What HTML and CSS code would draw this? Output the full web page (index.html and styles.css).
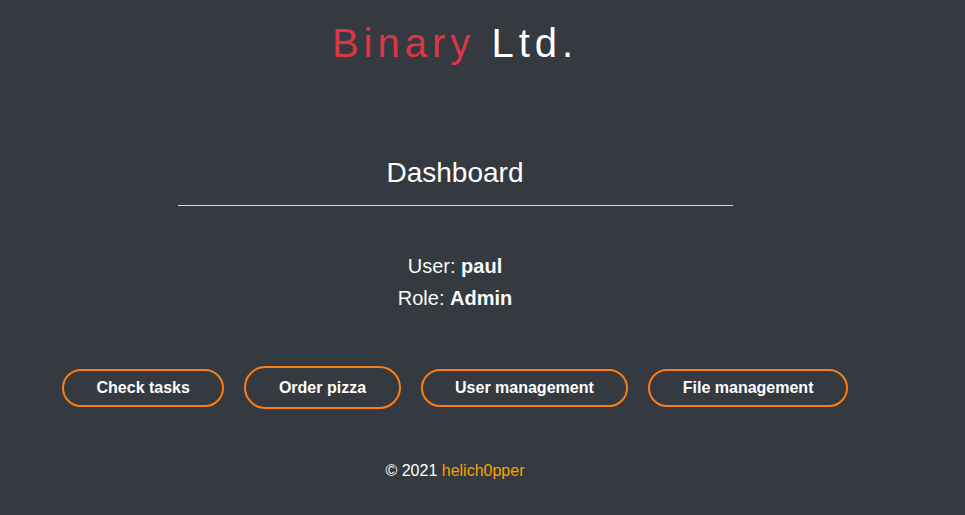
FILE: index.html
```html
<!DOCTYPE html>
<html lang="en">
<head>
<meta charset="utf-8">
<title>Binary Ltd. - Dashboard</title>
<link rel="stylesheet" href="styles.css">
</head>
<body>
<main class="page">
  <header class="brand">
    <h1 class="brand-title"><span class="brand-red">Binary</span> Ltd.</h1>
  </header>
  <section class="dash">
    <h2 class="dash-title">Dashboard</h2>
    <hr class="dash-rule">
    <div class="info">
      <p class="info-line">User: <b>paul</b></p>
      <p class="info-line">Role: <b>Admin</b></p>
    </div>
    <nav class="actions">
      <a class="btn" href="#">Check tasks</a>
      <a class="btn btn-tall" href="#">Order pizza</a>
      <a class="btn" href="#">User management</a>
      <a class="btn" href="#">File management</a>
    </nav>
  </section>
  <footer class="foot">© 2021 <a class="foot-link" href="#">helich0pper</a></footer>
</main>
</body>
</html>
```
FILE: styles.css
```css
html, body {
  margin: 0;
  padding: 0;
  background: #343a40;
  color: #f8f9fa;
  font-family: "Liberation Sans", Arial, sans-serif;
}
.page {
  width: 910px;
  display: flex;
  flex-direction: column;
  align-items: center;
}
.brand {
  padding-top: 20px;
}
.brand-title {
  margin: 0;
  font-size: 40px;
  line-height: 46px;
  font-weight: 400;
  letter-spacing: 5px;
  color: #ffffff;
}
.brand-red {
  color: #dc3545;
}
.dash {
  display: flex;
  flex-direction: column;
  align-items: center;
  width: 100%;
}
.dash-title {
  margin: 91px 0 0;
  font-size: 28px;
  line-height: 32px;
  font-weight: 400;
  color: #ffffff;
}
.dash-rule {
  width: 555px;
  margin: 16px 0 0;
  border: 0;
  border-top: 1px solid #d8d8d8;
  height: 0;
}
.info {
  margin-top: 44px;
  text-align: center;
}
.info-line {
  margin: 0;
  font-size: 20px;
  line-height: 32px;
}
.info-line b {
  font-weight: 700;
}
.actions {
  margin-top: 52px;
  display: flex;
  align-items: center;
  gap: 20px;
}
.btn {
  display: block;
  padding: 8px 32.5px;
  border: 2px solid #fd7e14;
  border-radius: 30px;
  color: #ffffff;
  font-size: 16px;
  line-height: 18px;
  font-weight: 700;
  text-decoration: none;
}
.btn-tall {
  padding-top: 10.5px;
  padding-bottom: 10.5px;
}
.foot {
  margin-top: 53px;
  font-size: 16px;
  line-height: 18px;
  color: #ffffff;
}
.foot-link {
  color: #f5a300;
  text-decoration: none;
}
```
